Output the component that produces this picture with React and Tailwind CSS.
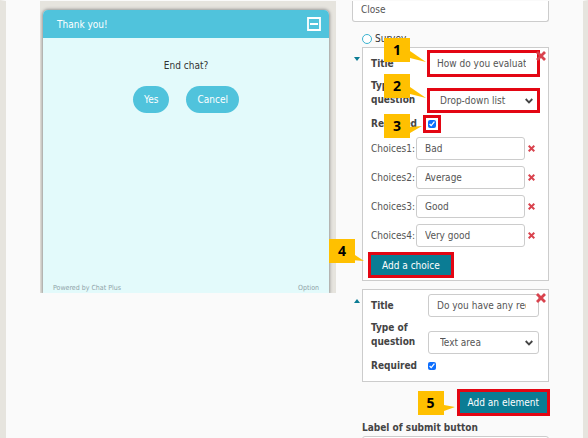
import { useState } from 'react';

const inputClass =
  'block w-full h-[23px] px-2 text-[10px] font-normal text-[#555] bg-white border border-[#ccc] rounded-[3px] outline-none';

const initialChoices = ['Bad', 'Average', 'Good', 'Very good'];

const CrossIcon = ({ className }) => (
  <svg viewBox="0 0 10 10" className={className} fill="none" stroke="currentColor" strokeWidth="2.8">
    <path d="M1 1 L9 9 M9 1 L1 9" />
  </svg>
);

// Red frame around a control with its numbered yellow tag
const Mark = ({ number, frame, tag, tail, points }) => (
  <>
    <span className={`absolute border-[3px] border-[#e30613] pointer-events-none ${frame}`} />
    <span className={`absolute z-10 pointer-events-none ${tag}`}>
      <svg viewBox="0 0 20 14" className={`absolute w-5 h-3.5 ${tail}`}>
        <polygon points={points} fill="#ffc000" />
      </svg>
      <span className="relative flex items-center justify-center w-[26px] h-6 bg-[#ffc000] text-black text-sm font-bold font-['Noto_Sans',sans-serif]">
        {number}
      </span>
    </span>
  </>
);

const ChatPreview = () => (
  <section className="flex-1 min-w-0 h-[292px] overflow-hidden bg-[#e6e4de] pl-[3px] pr-[7px] pt-[9px]">
    <div className="flex flex-col h-full rounded-t-[5px] bg-[#e3fafb] shadow-[0_0_3px_1px_#999]">
      <header className="flex items-center justify-between h-7 shrink-0 pr-2 pl-3.5 rounded-t-[5px] bg-[#50c3dc] text-white">
        <h1 className="font-medium">Thank you!</h1>
        <button type="button" aria-label="Minimize">
          <svg viewBox="0 0 14 14" className="w-3.5 h-3.5" fill="none" stroke="currentColor" strokeWidth="1.8">
            <path d="M1 1 H13 V13 H1 Z M3 7 H11" />
          </svg>
        </button>
      </header>
      <div className="flex-1 pt-5 text-center">
        <p className="leading-4 text-[#333]">End chat?</p>
        <div className="flex justify-center gap-[17px] mt-3">
          <button type="button" className="h-[27px] px-[11px] rounded-full bg-[#50c3dc] text-white font-medium">
            Yes
          </button>
          <button type="button" className="h-[27px] px-[11px] rounded-full bg-[#50c3dc] text-white font-medium">
            Cancel
          </button>
        </div>
      </div>
      <footer className="flex items-center justify-between px-2.5 text-[7px] leading-[10px] text-[#8fa3a8]">
        <span>Powered by Chat Plus</span>
        <span>Option</span>
      </footer>
    </div>
  </section>
);

const Question = ({ id, open, title, type, marked, children }) => {
  const [name, setName] = useState(title);
  const [kind, setKind] = useState(type);
  const [required, setRequired] = useState(true);

  return (
    <div className="flex items-start">
      <button type="button" aria-label="Toggle question" className="w-2.5 shrink-0 pl-0.5 pt-2.5 text-[#0b7c94]">
        <svg viewBox="0 0 6 4" className="w-1.5 h-1" fill="currentColor">
          <path d={open ? 'M0 0 H6 L3 4 Z' : 'M0 4 H6 L3 0 Z'} />
        </svg>
      </button>
      <div className="relative flex-1 min-w-0 pl-2 pr-[9px] pt-1 pb-1 bg-white border border-[#ccc]">
        <div className="grid grid-cols-[57px_1fr] items-center font-bold leading-[14px] text-[#444]">
          <label htmlFor={`${id}-title`}>Title</label>
          <div className="relative">
            <input
              id={`${id}-title`}
              className={`${inputClass} pr-3`}
              value={name}
              onChange={(e) => setName(e.target.value)}
            />
            {marked && (
              <Mark number="1" frame="-inset-x-px -top-0.5 -bottom-0.5" tag="-left-11 -top-3.5" tail="left-[22px] top-[13px]" points="0,0 4,0 20,11 0,6" />
            )}
          </div>
          <label htmlFor={`${id}-type`} className="pt-1 pb-1.5">
            Type of question
          </label>
          <div className="relative self-end mb-px">
            <select
              id={`${id}-type`}
              className={`${inputClass} appearance-none pl-[11px]`}
              value={kind}
              onChange={(e) => setKind(e.target.value)}
            >
              <option>Drop-down list</option>
              <option>Text area</option>
            </select>
            <svg viewBox="0 0 8 6" className="absolute right-1.5 top-[9px] w-2 h-1.5 pointer-events-none" fill="none" stroke="#444" strokeWidth="1.8">
              <path d="M0.7 1 L4 4.4 L7.3 1" />
            </svg>
            {marked && (
              <Mark number="2" frame="-inset-x-px -top-px -bottom-px" tag="-left-11 -top-[15px]" tail="left-[22px] top-[13px]" points="0,0 4,0 20,11 0,6" />
            )}
          </div>
          <label htmlFor={`${id}-required`} className="py-1">
            Required
          </label>
          <div className="relative w-2">
            <input
              id={`${id}-required`}
              type="checkbox"
              className="block w-2 h-2 accent-[#0d6efd]"
              checked={required}
              onChange={(e) => setRequired(e.target.checked)}
            />
            {marked && (
              <Mark number="3" frame="-inset-[5px]" tag="-left-11 -top-1.5" tail="left-[22px] top-[7px]" points="0,0 4,6 16,5 4,12 0,12" />
            )}
          </div>
        </div>
        <button type="button" aria-label="Delete question" className="absolute right-0.5 top-[3px] text-[#d9434e]">
          <CrossIcon className="w-2.5 h-2.5" />
        </button>
        {children}
      </div>
    </div>
  );
};

export default function App() {
  const [choices, setChoices] = useState(initialChoices);

  const updateChoice = (index, value) => {
    setChoices(choices.map((choice, i) => (i === index ? value : choice)));
  };

  return (
    <main className="flex h-screen overflow-hidden border-t border-t-[#fafafa] border-l-[6px] border-r-[5px] border-x-[#e6e4de] bg-[#fafafa] pl-[34px] font-['DejaVu_Sans_Condensed','Noto_Sans',sans-serif] text-[10px]">
      <ChatPreview />
      <form className="w-[247px] shrink-0 pl-4 pr-[34px]" onSubmit={(e) => e.preventDefault()}>
        <input
          aria-label="Close button label"
          className="block w-full h-[21px] px-2 pb-1 bg-white border border-t-0 border-[#ccc] rounded-b-[3px] text-[#555] outline-none"
          defaultValue="Close"
        />
        <label className="flex items-center gap-[3px] ml-2.5 mt-2 h-[17px] text-[#333] font-medium">
          <input type="radio" name="content" className="appearance-none w-2.5 h-2.5 rounded-full border border-[#3bb3d0] bg-white" />
          Survey
        </label>
        <Question id="q1" open marked title="How do you evaluate our service?" type="Drop-down list">
          <div className="flex flex-col gap-1.5 mt-0.5">
            {choices.map((choice, index) => (
              <div key={index} className="flex items-center">
                <label htmlFor={`choice-${index}`} className="w-[45px] shrink-0 whitespace-nowrap text-[#555]">
                  Choices{index + 1}:
                </label>
                <input
                  id={`choice-${index}`}
                  className={inputClass}
                  value={choice}
                  onChange={(e) => updateChoice(index, e.target.value)}
                />
                <button type="button" aria-label="Delete choice" className="ml-[3px] mr-1 shrink-0 text-[#d9434e]">
                  <CrossIcon className="w-[7px] h-[7px]" />
                </button>
              </div>
            ))}
          </div>
          <div className="relative w-fit mt-2 mb-px">
            <button
              type="button"
              className="block h-5 px-[11px] bg-[#0b7c94] text-white whitespace-nowrap"
              onClick={() => setChoices([...choices, ''])}
            >
              Add a choice
            </button>
            <Mark number="4" frame="-inset-[3px]" tag="-left-[42px] -top-4" tail="left-[22px] top-[13px]" points="0,0 4,3 13,9 0,8" />
          </div>
        </Question>
        <div className="mt-2">
          <Question id="q2" title="Do you have any requests?" type="Text area" />
        </div>
        <div className="relative w-fit ml-auto mt-2.5 mr-0.5">
          <button type="button" className="block h-[21px] px-2 bg-[#0b7c94] text-white whitespace-nowrap">
            Add an element
          </button>
          <Mark number="5" frame="-inset-[3px]" tag="-left-[42px] -top-px" tail="left-[22px] top-[10px]" points="0,4 4,4 15,6 4,10 0,10" />
        </div>
        <div className="ml-2.5 mt-[7px]">
          <label htmlFor="submit-label" className="block font-bold leading-4 text-[#444]">
            Label of submit button
          </label>
          <input id="submit-label" className={inputClass} />
        </div>
      </form>
    </main>
  );
}
